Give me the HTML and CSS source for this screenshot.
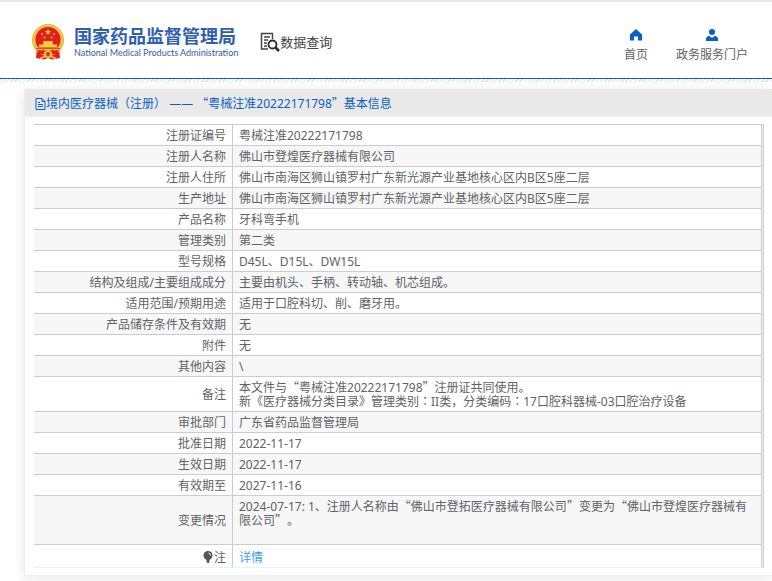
FILE: index.html
```html
<!DOCTYPE html>
<html lang="zh-CN">
<head>
  <meta charset="UTF-8">
  <meta name="viewport" content="width=device-width, initial-scale=1.0">
  <title>国家药品监督管理局 - 数据查询</title>
  <link rel="stylesheet" href="styles.css">
</head>
<body>
  <header class="header">
    <a class="logo" href="#">
      <svg class="emblem" viewBox="0 0 34 36" aria-hidden="true">
        <path d="M6 24 L5 34 L13 35.500 L17 34 L21 35.500 L29 34 L28 24 Z" fill="#dc211c"/>
        <circle cx="17" cy="16" r="16" fill="#e9b23a"/>
        <circle cx="17" cy="16" r="14.500" fill="none" stroke="#f7d265" stroke-width="1"/>
        <circle cx="17" cy="15.500" r="12.500" fill="#e0201b"/>
        <path d="M17 5 l.8 2 2.200 .1 -1.700 1.400 .6 2.100 -1.900-1.200 -1.900 1.200 .6-2.100 -1.700-1.400 2.200-.1z" fill="#fbd94b"/>
        <g fill="#f9c846">
          <circle cx="11" cy="10" r=".9"/>
          <circle cx="23" cy="10" r=".9"/>
          <circle cx="13.500" cy="13.500" r=".9"/>
          <circle cx="20.500" cy="13.500" r=".9"/>
        </g>
        <path d="M12 18.500 l1-1.500 h8 l1 1.500 v2 h4 v3 H8 v-3 h4z" fill="#f6cb45"/>
        <path d="M5 24 h24 l-3 6 h-18z" fill="#e0201b"/>
        <path d="M6 25.500 h22" stroke="#f3bf3c" stroke-width="1.500"/>
        <circle cx="17" cy="30" r="3" fill="#e0201b" stroke="#f3bf3c" stroke-width="2"/>
        <path d="M9 34.500 l5-2 M25 34.500 l-5-2" stroke="#f3bf3c" stroke-width="1.500"/>
      </svg>
      <span class="logo-text">
        <span class="logo-cn">国家药品监督管理局</span>
        <span class="logo-en">National Medical Products Administration</span>
      </span>
    </a>
    <a class="search-title" href="#">
      <svg class="search-icon" viewBox="0 0 20 20" aria-hidden="true">
        <path d="M8 17 H1.500 V1.500 H12.500 V7" fill="none" stroke="#444" stroke-width="1.500"/>
        <path d="M4 5 h6 M4 8 h4 M4 11 h3 M4 14 h3" stroke="#444" stroke-width="1.300"/>
        <circle cx="12.500" cy="12.500" r="4" fill="none" stroke="#2b2b40" stroke-width="1.800"/>
        <path d="M15.500 15.500 L19 19" stroke="#2b2b40" stroke-width="2.600"/>
      </svg>
      <span>数据查询</span>
    </a>
    <nav class="nav">
      <a href="#">
        <svg viewBox="0 0 12 12" aria-hidden="true"><path d="M6 0 L12 5.500 V11.500 H8 V7.500 H4 V11.500 H0 V5.500 Z" fill="#0a5fc4"/></svg>
        <span>首页</span>
      </a>
      <a href="#">
        <svg viewBox="0 0 12 12" aria-hidden="true"><circle cx="6" cy="3" r="3" fill="#0a5fc4"/><path d="M0 12 V10 Q0 7 3.500 7 L6 9 L8.500 7 Q12 7 12 10 V12 Z" fill="#0a5fc4"/></svg>
        <span>政务服务门户</span>
      </a>
    </nav>
  </header>
  <div class="stripe"></div>

  <main class="card">
    <h1 class="card-header">
      <svg class="doc-icon" viewBox="0 0 11 12" aria-hidden="true">
        <path d="M1 .5 H7 L10 3.500 V11.500 H1 Z M7 .5 V3.500 H10 M3 4.500 H5 M3 6.500 H8 M3 8.500 H8" fill="none" stroke="#0a5fc4"/>
      </svg>
      <span>境内医疗器械<span class="mid" lang="zh-TW">（</span>注册<span class="mid" lang="zh-TW">）</span> <span class="dash">——</span> <span class="cjk">“</span>粤械注准20222171798<span class="cjk">”</span>基本信息</span>
    </h1>
    <div class="card-body">
      <div class="table-wrap">
        <table class="info">
          <tbody>
            <tr><th scope="row">注册证编号</th><td>粤械注准20222171798</td></tr>
            <tr><th scope="row">注册人名称</th><td>佛山市登煌医疗器械有限公司</td></tr>
            <tr><th scope="row">注册人住所</th><td>佛山市南海区狮山镇罗村广东新光源产业基地核心区内B区5座二层</td></tr>
            <tr><th scope="row">生产地址</th><td>佛山市南海区狮山镇罗村广东新光源产业基地核心区内B区5座二层</td></tr>
            <tr><th scope="row">产品名称</th><td>牙科弯手机</td></tr>
            <tr><th scope="row">管理类别</th><td>第二类</td></tr>
            <tr><th scope="row">型号规格</th><td>D45L、D15L、DW15L</td></tr>
            <tr><th scope="row">结构及组成/主要组成成分</th><td>主要由机头、手柄、转动轴、机芯组成。</td></tr>
            <tr><th scope="row">适用范围/预期用途</th><td>适用于口腔科切、削、磨牙用。</td></tr>
            <tr><th scope="row">产品储存条件及有效期</th><td>无</td></tr>
            <tr><th scope="row">附件</th><td>无</td></tr>
            <tr><th scope="row">其他内容</th><td>\</td></tr>
            <tr><th scope="row">备注</th><td>本文件与<span class="cjk">“</span>粤械注准20222171798<span class="cjk">”</span>注册证共同使用。<br>新《医疗器械分类目录》管理类别<span class="mid" lang="zh-TW">：</span>II类，分类编码<span class="mid" lang="zh-TW">：</span>17口腔科器械-03口腔治疗设备</td></tr>
            <tr><th scope="row">审批部门</th><td>广东省药品监督管理局</td></tr>
            <tr><th scope="row">批准日期</th><td>2022-11-17</td></tr>
            <tr><th scope="row">生效日期</th><td>2022-11-17</td></tr>
            <tr><th scope="row">有效期至</th><td>2027-11-16</td></tr>
            <tr><th scope="row">变更情况</th><td>2024-07-17: 1、注册人名称由<span class="cjk">“</span>佛山市登拓医疗器械有限公司<span class="cjk">”</span>变更为<span class="cjk">“</span>佛山市登煌医疗器械有限公司<span class="cjk">”</span>。<br><br></td></tr>
            <tr class="note">
              <th scope="row"><svg class="bulb" viewBox="0 0 10 12" aria-hidden="true"><circle cx="5" cy="4.500" r="4.500" fill="#555"/><path d="M3.500 8 h3 v3 l-1 1 h-1 l-1-1z" fill="#555"/><path d="M5.500 2 q2 .5 2 2.500" fill="none" stroke="#fff"/></svg>注</th>
              <td><a class="detail" href="#">详情</a></td>
            </tr>
          </tbody>
        </table>
      </div>
    </div>
  </main>
</body>
</html>
```

FILE: styles.css
```css
* {
  box-sizing: border-box;
}

body {
  margin: 0;
  font-family: "Noto Sans", "Noto Sans CJK SC", sans-serif;
  font-size: 12px;
  line-height: 14px;
  text-spacing-trim: space-all;
  color: #606266;
  background: #fff;
}

a {
  color: inherit;
  text-decoration: none;
}

/* full-width punctuation, kept from stretching the line box */
.cjk,
.mid,
.dash {
  font-family: "Noto Sans CJK SC", sans-serif;
  line-height: 0;
}

.mid {
  font-family: "Noto Sans CJK TC", sans-serif;
}

.dash {
  font-family: "DejaVu Sans", sans-serif;
}

/* header */
.header {
  display: flex;
  align-items: center;
  height: 79px;
  padding: 4px 24px 0 31px;
  border-top: 2px solid #e6e6e6;
  border-bottom: 1px solid #0a5fc4;
}

.logo {
  display: flex;
  align-items: center;
  gap: 9px;
  color: #2f5db0;
}

.emblem {
  width: 34px;
  height: 36px;
}

.logo-text {
  display: flex;
  flex-direction: column;
}

.logo-cn {
  font-family: "Noto Sans CJK SC", sans-serif;
  font-size: 18px;
  line-height: 22px;
  font-weight: 700;
}

.logo-en {
  font-family: Lato, sans-serif;
  font-size: 9px;
  line-height: 14px;
}

.search-title {
  display: flex;
  align-items: center;
  margin-left: 22px;
  font-size: 13px;
  color: #444;
}

.search-icon {
  width: 20px;
  height: 20px;
}

.nav {
  display: flex;
  gap: 28px;
  margin-left: auto;
  padding-top: 6px;
}

.nav a {
  display: flex;
  flex-direction: column;
  align-items: center;
  gap: 7px;
}

.nav svg {
  width: 12px;
  height: 12px;
}

.stripe {
  height: 3px;
  background: repeating-linear-gradient(135deg, #e2e2e2 0 1px, #fff 1px 3px);
}

/* card */
.card {
  margin: 7px 0 5px 24px;
  border: 1px solid #ebeef5;
  border-right: 0;
  border-top: 0;
  box-shadow: 0 2px 12px rgba(0, 0, 0, 0.1);
}

.card-header {
  display: flex;
  align-items: center;
  height: 28px;
  margin: 0;
  padding: 2px 10px 0;
  font-size: 12px;
  font-weight: 400;
  color: #0a5fc4;
  background: #e9e9e9;
  border-bottom: 1px solid #ebeef5;
}

.doc-icon {
  width: 11px;
  height: 12px;
}

.card-body {
  padding: 7px 8px 7px 9px;
}

.table-wrap {
  padding-right: 1px;
  background: #ebeef5;
  border-right: 1px solid #ccc;
}

.info {
  width: 100%;
  table-layout: fixed;
  border-collapse: separate;
  border-spacing: 0;
  border-top: 1px solid #ccc;
  background: #fff;
}

.info th,
.info td {
  padding: 4px 6px 2px;
  border-right: 1px solid #ccc;
  border-bottom: 1px solid #ccc;
  font-weight: 400;
  vertical-align: middle;
}

.info th {
  width: 199px;
  text-align: right;
}

.info td {
  text-align: left;
}

.info tr:nth-child(even) {
  background: #f7f7f7;
}

.info .note th,
.info .note td {
  padding-top: 6px;
  border-bottom-color: #ebeef5;
}

.bulb {
  width: 10px;
  height: 12px;
  margin-right: 1px;
  vertical-align: -1px;
}

.detail {
  color: #409eff;
}
```
